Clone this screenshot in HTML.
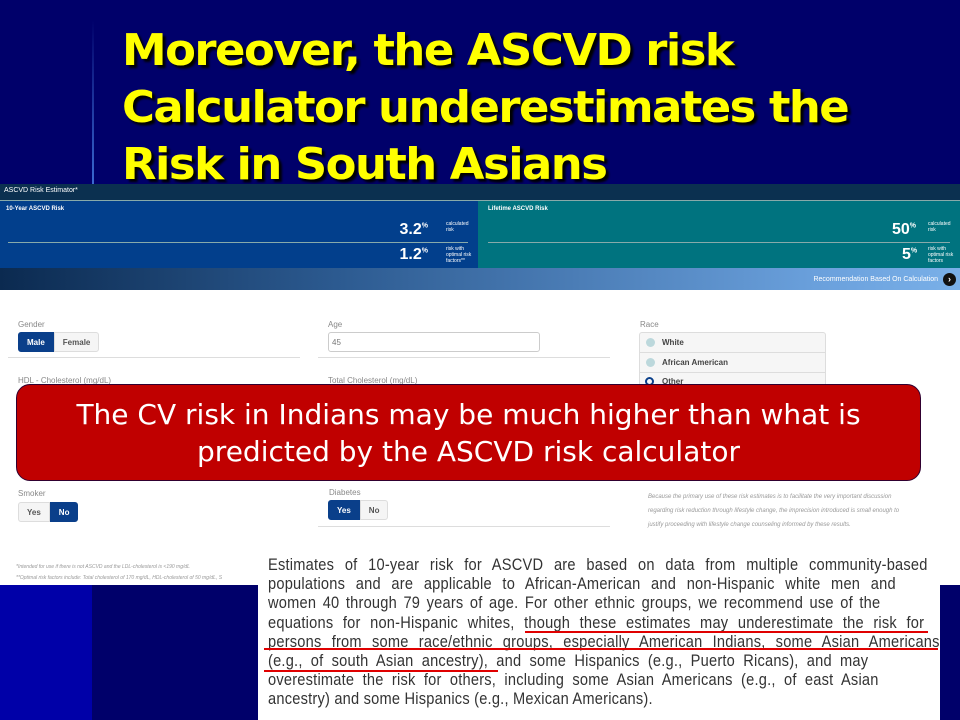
<!DOCTYPE html>
<html><head><meta charset="utf-8"><style>
*{margin:0;padding:0;box-sizing:border-box}
body{width:960px;height:720px;position:relative;overflow:hidden;background:#00006a;font-family:"Liberation Sans",sans-serif}
.abs{position:absolute}
.title{left:122px;top:22px;color:#ffff00;font:bold 44px/57px "DejaVu Sans",sans-serif;letter-spacing:-1.5px;text-shadow:3px 3px 2px #000;transform:scaleX(1.02);transform-origin:left top;white-space:nowrap}
.sm{font-size:7px;color:#fff}
.lbl{font-size:8px;color:#888}
.btn{display:inline-block;height:20px;line-height:20px;font-size:8px;font-weight:bold;padding:0 8px;border:1px solid #ddd;background:#f5f5f5;color:#555}
.on{background:#0a3f8a;color:#fff;border-color:#0a3f8a}
.rule{height:1px;background:#ddd}
.it{font-style:italic;font-size:6px;color:#999;line-height:14px}
.bt{position:absolute;left:268px;font:17px/19px 'Liberation Sans',sans-serif;color:#333;white-space:nowrap;text-align:justify;text-align-last:justify;letter-spacing:0.25px;transform:scaleX(0.86);transform-origin:left top}
</style></head><body>
<div class="abs" style="left:92px;top:20px;width:2px;height:165px;background:linear-gradient(#00006a,#3a6ad0)"></div>
<div class="abs title">Moreover, the ASCVD risk<br>Calculator underestimates the<br>Risk in South Asians</div>

<div class="abs" style="left:0;top:184px;width:960px;height:16px;background:#0b3050"><span class="sm" style="position:absolute;left:4px;top:3px">ASCVD Risk Estimator*</span></div>
<div class="abs" style="left:0;top:200px;width:478px;height:68px;background:#023f8c;border-top:1px solid #8aa">
 <span class="sm" style="position:absolute;left:6px;top:5px;font-weight:bold;font-size:6px">10-Year ASCVD Risk</span>
 <span style="position:absolute;right:50px;top:20px;color:#fff;font-weight:bold;font-size:16px">3.2<sup style="font-size:7px">%</sup></span>
 <span style="position:absolute;left:446px;top:20px;color:#fff;font-size:5px;line-height:6px">calculated<br>risk</span>
 <div style="position:absolute;left:8px;right:10px;top:41px;height:1px;background:#8aa"></div>
 <span style="position:absolute;right:50px;top:45px;color:#fff;font-weight:bold;font-size:16px">1.2<sup style="font-size:7px">%</sup></span>
 <span style="position:absolute;left:446px;top:45px;color:#fff;font-size:5px;line-height:6px">risk with<br>optimal risk<br>factors**</span>
</div>
<div class="abs" style="left:478px;top:200px;width:482px;height:68px;background:#00737f;border-top:1px solid #8aa">
 <span class="sm" style="position:absolute;left:10px;top:5px;font-weight:bold;font-size:6px">Lifetime ASCVD Risk</span>
 <span style="position:absolute;left:414px;top:20px;color:#fff;font-weight:bold;font-size:16px">50<sup style="font-size:7px">%</sup></span>
 <span style="position:absolute;left:450px;top:20px;color:#fff;font-size:5px;line-height:6px">calculated<br>risk</span>
 <div style="position:absolute;left:10px;right:10px;top:41px;height:1px;background:#8aa"></div>
 <span style="position:absolute;left:424px;top:45px;color:#fff;font-weight:bold;font-size:16px">5<sup style="font-size:7px">%</sup></span>
 <span style="position:absolute;left:450px;top:45px;color:#fff;font-size:5px;line-height:6px">risk with<br>optimal risk<br>factors</span>
</div>
<div class="abs" style="left:0;top:268px;width:960px;height:22px;background:linear-gradient(90deg,#0b2a50,#2c5a90 35%,#6aa0dc 85%,#7ab0e8)">
 <span class="sm" style="position:absolute;right:22px;top:8px">Recommendation Based On Calculation</span>
 <span style="position:absolute;right:4px;top:5px;width:13px;height:13px;border-radius:50%;background:#111;color:#fff;font-size:9px;line-height:13px;text-align:center;font-weight:bold">›</span>
</div>

<div class="abs" style="left:0;top:290px;width:960px;height:295px;background:#fff"></div>
<div class="abs" style="left:0;top:585px;width:92px;height:135px;background:#0000a8"></div>

<div class="abs lbl" style="left:18px;top:320px">Gender</div>
<div class="abs" style="left:18px;top:332px"><span class="btn on" style="border-radius:3px 0 0 3px">Male</span><span class="btn" style="border-radius:0 3px 3px 0">Female</span></div>
<div class="abs rule" style="left:8px;top:357px;width:292px"></div>
<div class="abs lbl" style="left:18px;top:376px">HDL - Cholesterol (mg/dL)</div>
<div class="abs lbl" style="left:328px;top:320px">Age</div>
<div class="abs" style="left:328px;top:332px;width:212px;height:20px;border:1px solid #ccc;border-radius:3px;font-size:8px;color:#777;padding:5px 3px">45</div>
<div class="abs rule" style="left:318px;top:357px;width:292px"></div>
<div class="abs lbl" style="left:328px;top:376px">Total Cholesterol (mg/dL)</div>
<div class="abs lbl" style="left:640px;top:320px">Race</div>
<div class="abs" style="left:639px;top:332px;width:187px;height:55px;border:1px solid #ddd;border-radius:3px;background:#f6f6f6;font-size:8px;font-weight:bold;color:#444">
 <div style="height:20px;border-bottom:1px solid #ddd;padding:5px 0 0 22px;position:relative"><i style="position:absolute;left:6px;top:5px;width:9px;height:9px;border-radius:50%;background:#bcd8dc"></i>White</div>
 <div style="height:20px;border-bottom:1px solid #ddd;padding:5px 0 0 22px;position:relative"><i style="position:absolute;left:6px;top:5px;width:9px;height:9px;border-radius:50%;background:#bcd8dc"></i>African American</div>
 <div style="padding:4px 0 0 22px;position:relative"><i style="position:absolute;left:5px;top:4px;width:9px;height:9px;border-radius:50%;border:2px solid #0a3f8a"></i>Other</div>
</div>

<div class="abs" style="left:16px;top:384px;width:905px;height:97px;background:#c00000;border:1px solid #300030;border-radius:14px;color:#fff;font:28px/37px 'DejaVu Sans',sans-serif;text-align:center;padding-top:11px;white-space:nowrap">The CV risk in Indians may be much higher than what is<br>predicted by the ASCVD risk calculator</div>

<div class="abs lbl" style="left:18px;top:489px">Smoker</div>
<div class="abs" style="left:18px;top:502px"><span class="btn" style="border-radius:3px 0 0 3px">Yes</span><span class="btn on" style="border-radius:0 3px 3px 0">No</span></div>
<div class="abs lbl" style="left:329px;top:488px">Diabetes</div>
<div class="abs" style="left:328px;top:500px"><span class="btn on" style="border-radius:3px 0 0 3px">Yes</span><span class="btn" style="border-radius:0 3px 3px 0">No</span></div>
<div class="abs rule" style="left:318px;top:526px;width:292px"></div>
<div class="abs it" style="left:648px;top:490px;width:260px">Because the primary use of these risk estimates is to facilitate the very important discussion regarding risk reduction through lifestyle change, the imprecision introduced is small enough to justify proceeding with lifestyle change counseling informed by these results.</div>
<div class="abs it" style="left:16px;top:562px;width:245px;white-space:nowrap;overflow:hidden;font-size:5px;line-height:11px">*Intended for use if there is not ASCVD and the LDL-cholesterol is &lt;190 mg/dL<br>**Optimal risk factors include: Total cholesterol of 170 mg/dL, HDL-cholesterol of 50 mg/dL, S</div>

<div class="abs" style="left:258px;top:545px;width:682px;height:175px;background:#fff"></div>
<div class="bt" style="top:555px;width:767px">Estimates of 10-year risk for ASCVD are based on data from multiple community-based</div>
<div class="bt" style="top:574px;width:730px">populations and are applicable to African-American and non-Hispanic white men and</div>
<div class="bt" style="top:593px;width:712px">women 40 through 79 years of age. For other ethnic groups, we recommend use of the</div>
<div class="bt" style="top:613px;width:763px">equations for non-Hispanic whites, though these estimates may underestimate the risk for</div>
<div class="bt" style="top:632px;width:781px">persons from some race/ethnic groups, especially American Indians, some Asian Americans</div>
<div class="bt" style="top:651px;width:698px">(e.g., of south Asian ancestry), and some Hispanics (e.g., Puerto Ricans), and may</div>
<div class="bt" style="top:670px;width:710px">overestimate the risk for others, including some Asian Americans (e.g., of east Asian</div>
<div class="bt" style="top:689px;width:436px">ancestry) and some Hispanics (e.g., Mexican Americans).</div>
<div class="abs" style="left:525px;top:631px;width:403px;height:2px;background:#e00000"></div>
<div class="abs" style="left:264px;top:648px;width:674px;height:2px;background:#e00000"></div>
<div class="abs" style="left:264px;top:670px;width:234px;height:2px;background:#e00000"></div>
</body></html>
